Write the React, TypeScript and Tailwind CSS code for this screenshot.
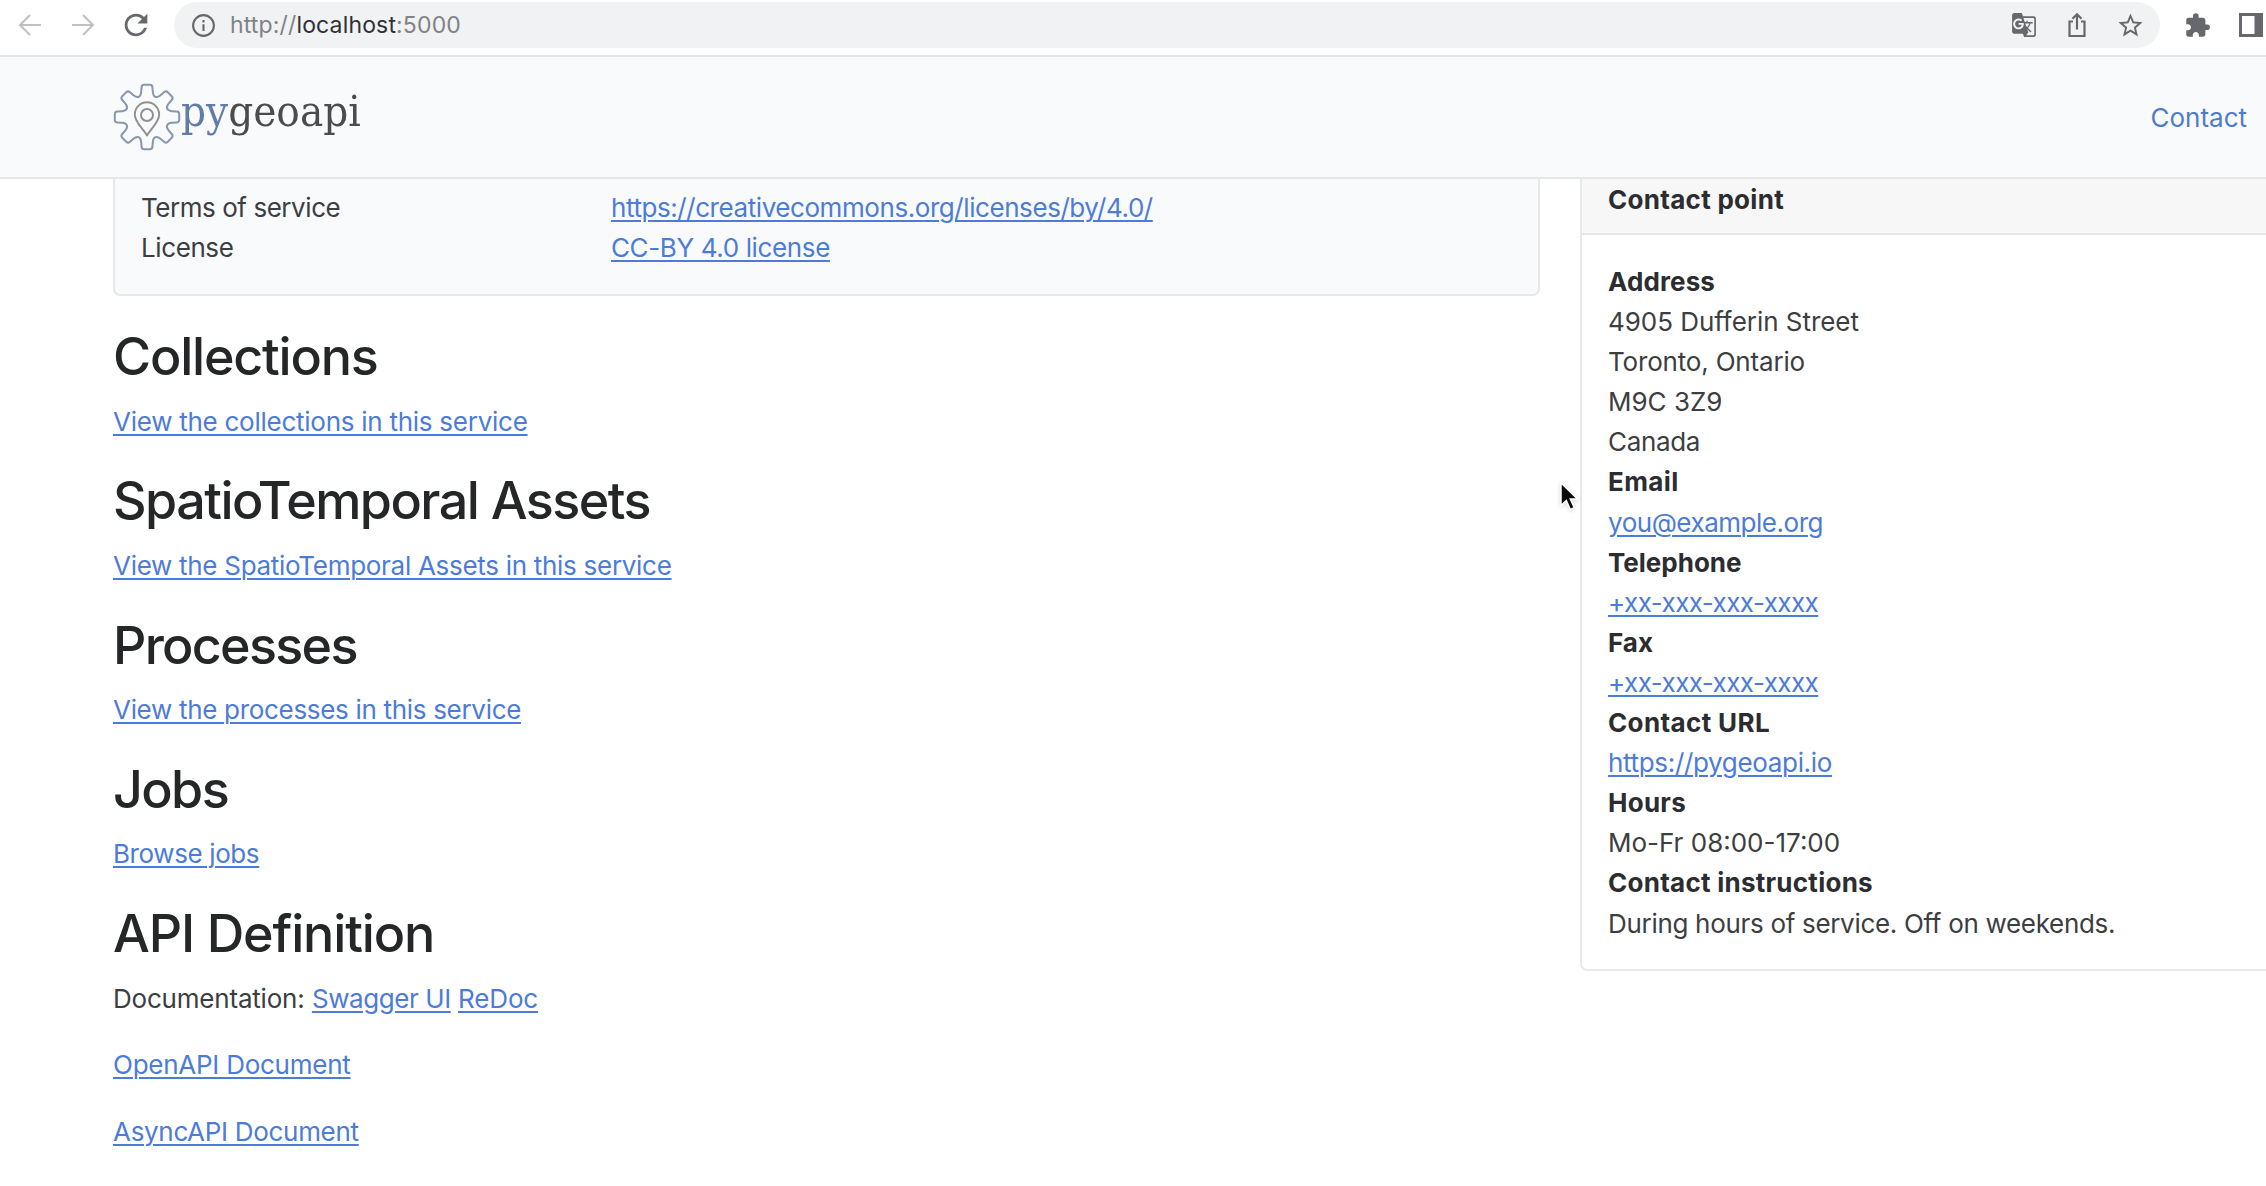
import type { ReactNode } from "react";
import { MdExtension, MdGTranslate, MdRefresh, MdStarBorder } from "react-icons/md";

function gearPath(): string {
  const points: [number, number][] = [];
  for (let i = 0; i < 8; i++) {
    const a = (i * Math.PI) / 4;
    const local: [number, number][] = [[21, -6.2], [32.2, -5.2], [32.2, 5.2], [21, 6.2]];
    for (const [r, t] of local) {
      points.push([34 + r * Math.cos(a) - t * Math.sin(a), 34 + r * Math.sin(a) + t * Math.cos(a)]);
    }
  }
  const toward = (p: [number, number], q: [number, number], d: number) => {
    const len = Math.hypot(q[0] - p[0], q[1] - p[1]);
    const k = Math.min(d, len / 2) / len;
    return `${(p[0] + (q[0] - p[0]) * k).toFixed(2)} ${(p[1] + (q[1] - p[1]) * k).toFixed(2)}`;
  };
  const n = points.length;
  return (
    points
      .map((p, i) => {
        const prev = points[(i + n - 1) % n];
        const next = points[(i + 1) % n];
        const corner = i % 4 === 1 || i % 4 === 2 ? 2.4 : 4;
        return `${i ? "L" : "M"}${toward(p, prev, corner)}Q${p[0].toFixed(2)} ${p[1].toFixed(2)} ${toward(p, next, corner)}`;
      })
      .join("") + "Z"
  );
}

function Logo() {
  return (
    <a className="flex items-start" href="#">
      <svg className="size-[68px] shrink-0" viewBox="0 0 68 68" fill="none">
        <path d={gearPath()} stroke="#8797b0" strokeWidth="2" />
        <path
          d="M34 52.5C31 46.5 21.8 39.5 21.8 31.5a12.2 12.2 0 0 1 24.4 0C46.2 39.5 37 46.5 34 52.5Z"
          stroke="#8f8f8f"
          strokeWidth="1.9"
          strokeLinejoin="round"
        />
        <circle cx="34" cy="32" r="6" stroke="#8f8f8f" strokeWidth="2" />
      </svg>
      <span className="inline-block origin-left scale-x-[0.91] font-['DejaVu_Serif',serif] text-[43px] leading-[56px] text-[#4c4c4c]">
        <span className="text-[#617ca6]">py</span>geoapi
      </span>
    </a>
  );
}

function BrowserBar() {
  return (
    <div className="flex h-[57px] items-start border-b-2 border-[#e3e4e6] bg-white pt-[2px] text-[#66686b]">
      <div className="flex h-[46px] w-[174px] shrink-0 items-center pl-[18px]">
        <svg className="h-6 w-6" viewBox="0 0 24 24" fill="none" stroke="#bfc0c2" strokeWidth="2">
          <path d="M23 12H2.500M12 2 2 12l10 10" />
        </svg>
        <svg className="ml-[29px] h-6 w-6" viewBox="0 0 24 24" fill="none" stroke="#bfc0c2" strokeWidth="2">
          <path d="M1 12h20.500M12 2l10 10-10 10" />
        </svg>
        <MdRefresh className="ml-[24px] size-[34px]" />
      </div>
      <div className="flex h-[46px] w-[1986px] shrink-0 items-center rounded-full bg-[#f1f2f3] pl-[17px]">
        <svg className="size-[25px]" viewBox="0 0 25 25" fill="none" stroke="currentColor" strokeWidth="2.100">
          <circle cx="12.500" cy="12.500" r="10.400" />
          <path d="M12.500 11.300v6.700M12.500 7v2.500" />
        </svg>
        <div className="ml-[14px] pt-px text-[23px] tracking-[0.15px] text-[#808285]">
          http://<span className="text-[#303134]">localhost</span>:5000
        </div>
        <div className="ml-auto flex items-center pr-[15px]">
          <MdGTranslate className="size-[26px]" />
          <svg className="ml-[28px] h-[28px] w-[24px]" viewBox="0 0 24 28" fill="none" stroke="currentColor" strokeWidth="2.200">
            <path d="M8 10.500H4.500v14.500h15V10.500H16M12 18.500V4M7.500 7.800 12 3.300l4.500 4.500" />
          </svg>
          <MdStarBorder className="ml-[27px] size-[29px]" />
        </div>
      </div>
      <div className="flex h-[46px] items-center">
        <MdExtension className="ml-[24px] size-[27px]" />
        <svg className="ml-[28px] h-[24px] w-[24px]" viewBox="0 0 24 24" fill="currentColor">
          <path fillRule="evenodd" d="M0 0h24v24H0ZM3 3v18h12.500V3Z" />
        </svg>
      </div>
    </div>
  );
}

function Link({ children, className = "" }: { children: ReactNode; className?: string }) {
  return (
    <a
      href="#"
      className={`text-[#4c7bda] underline decoration-2 underline-offset-[3px] ${className}`}
    >
      {children}
    </a>
  );
}

function Section({ title, titleClass, children }: { title: string; titleClass: string; children: ReactNode }) {
  return (
    <section className="mb-[26.7px]">
      <h2 className={`mb-[12.6px] pt-px text-[52px] leading-[64px] font-medium text-[#242628] ${titleClass}`}>{title}</h2>
      {children}
    </section>
  );
}

const contact: { label: string; spacing: string; lines: ReactNode[] }[] = [
  {
    label: "Address",
    spacing: "tracking-[0.12px]",
    lines: [
      <span className="tracking-[-0.04px]">4905 Dufferin Street</span>,
      <span className="tracking-[-0.18px]">Toronto, Ontario</span>,
      "M9C 3Z9",
      <span className="tracking-[-0.35px]">Canada</span>,
    ],
  },
  { label: "Email", spacing: "tracking-[0.4px]", lines: [<Link className="tracking-[-0.47px]">you@example.org</Link>] },
  { label: "Telephone", spacing: "", lines: [<Link className="tracking-[-0.57px]">+xx-xxx-xxx-xxxx</Link>] },
  { label: "Fax", spacing: "", lines: [<Link className="tracking-[-0.57px]">+xx-xxx-xxx-xxxx</Link>] },
  { label: "Contact URL", spacing: "tracking-[0.37px]", lines: [<Link className="tracking-[-0.33px]">https://pygeoapi.io</Link>] },
  { label: "Hours", spacing: "tracking-[0.26px]", lines: ["Mo-Fr 08:00-17:00"] },
  {
    label: "Contact instructions",
    spacing: "tracking-[0.26px]",
    lines: [<span className="tracking-[-0.31px]">During hours of service. Off on weekends.</span>],
  },
];

function ContactCard() {
  return (
    <aside className="-mt-4 h-[808px] w-[760px] shrink-0 rounded-[7px] border-2 border-[#e8e9ea]">
      <div className="h-[70px] border-b-2 border-[#e4e5e6] bg-[#f7f7f8] pt-[15px] pl-[26px] leading-10 font-bold tracking-[0.29px] text-[#2b2d30]">
        Contact point
      </div>
      <dl className="pt-[27px] pl-[26px] leading-[40.1px]">
        {contact.map(({ label, spacing, lines }) => (
          <div key={label}>
            <dt className={`font-bold text-[#2b2d30] ${spacing}`}>{label}</dt>
            {lines.map((line, i) => (
              <dd key={i}>{line}</dd>
            ))}
          </div>
        ))}
      </dl>
    </aside>
  );
}

function Pointer() {
  return (
    <svg className="absolute top-[481px] left-[1559px] h-[32px] w-[22px] drop-shadow-sm" viewBox="0 0 22 32">
      <path
        d="M2 2v22.500l5.300-5 4 9 4-1.800-4-8.600h7.500Z"
        fill="#0b0b0b"
        stroke="#ffffff"
        strokeWidth="1.500"
      />
    </svg>
  );
}

export default function App() {
  return (
    <div className="relative h-[1186px] w-[2266px] overflow-hidden bg-white font-['Inter',sans-serif] text-[26px] text-[#3c3e41]">
      <BrowserBar />
      <header className="relative z-10 flex h-[122px] items-center justify-between border-b-2 border-[#e4e6e8] bg-[#f9fafc] pr-[19px] pl-[113px]">
        <Logo />
        <a href="#" className="text-[#507bcd]">Contact</a>
      </header>
      <main className="flex items-start pl-[113px]">
        <div className="w-[1427px] shrink-0">
          <div className="mb-[28px] h-[117px] rounded-b-[7px] border-2 border-t-0 border-[#e6e8ea] bg-[#f9fafb] pt-[9px] pl-[26px] leading-10">
            <div className="flex">
              <div className="w-[470px] tracking-[-0.45px]">Terms of service</div>
              <Link className="tracking-[-0.43px]">https://creativecommons.org/licenses/by/4.0/</Link>
            </div>
            <div className="flex">
              <div className="w-[470px] tracking-[-0.4px]">License</div>
              <Link className="tracking-[-0.37px]">CC-BY 4.0 license</Link>
            </div>
          </div>
          <div className="leading-10">
            <Section title="Collections" titleClass="tracking-[-1.2px]">
              <Link className="tracking-[-0.26px]">View the collections in this service</Link>
            </Section>
            <Section title="SpatioTemporal Assets" titleClass="tracking-[-1.52px]">
              <Link className="tracking-[-0.29px]">View the SpatioTemporal Assets in this service</Link>
            </Section>
            <Section title="Processes" titleClass="tracking-[-1.7px]">
              <Link className="tracking-[-0.31px]">View the processes in this service</Link>
            </Section>
            <Section title="Jobs" titleClass="tracking-[-1.6px]">
              <Link className="tracking-[-0.39px]">Browse jobs</Link>
            </Section>
            <Section title="API Definition" titleClass="tracking-[-1.15px]">
              <div className="flex flex-col gap-[26.7px]">
                <p>
                  <span className="tracking-[-0.2px]">Documentation:</span>{" "}
                  <Link className="tracking-[-0.42px]">Swagger UI</Link>{" "}
                  <Link className="tracking-[-0.14px]">ReDoc</Link>
                </p>
                <p>
                  <Link className="tracking-[-0.25px]">OpenAPI Document</Link>
                </p>
                <p>
                  <Link className="tracking-[-0.3px]">AsyncAPI Document</Link>
                </p>
              </div>
            </Section>
          </div>
        </div>
        <div className="w-[40px] shrink-0" />
        <ContactCard />
      </main>
      <Pointer />
    </div>
  );
}
